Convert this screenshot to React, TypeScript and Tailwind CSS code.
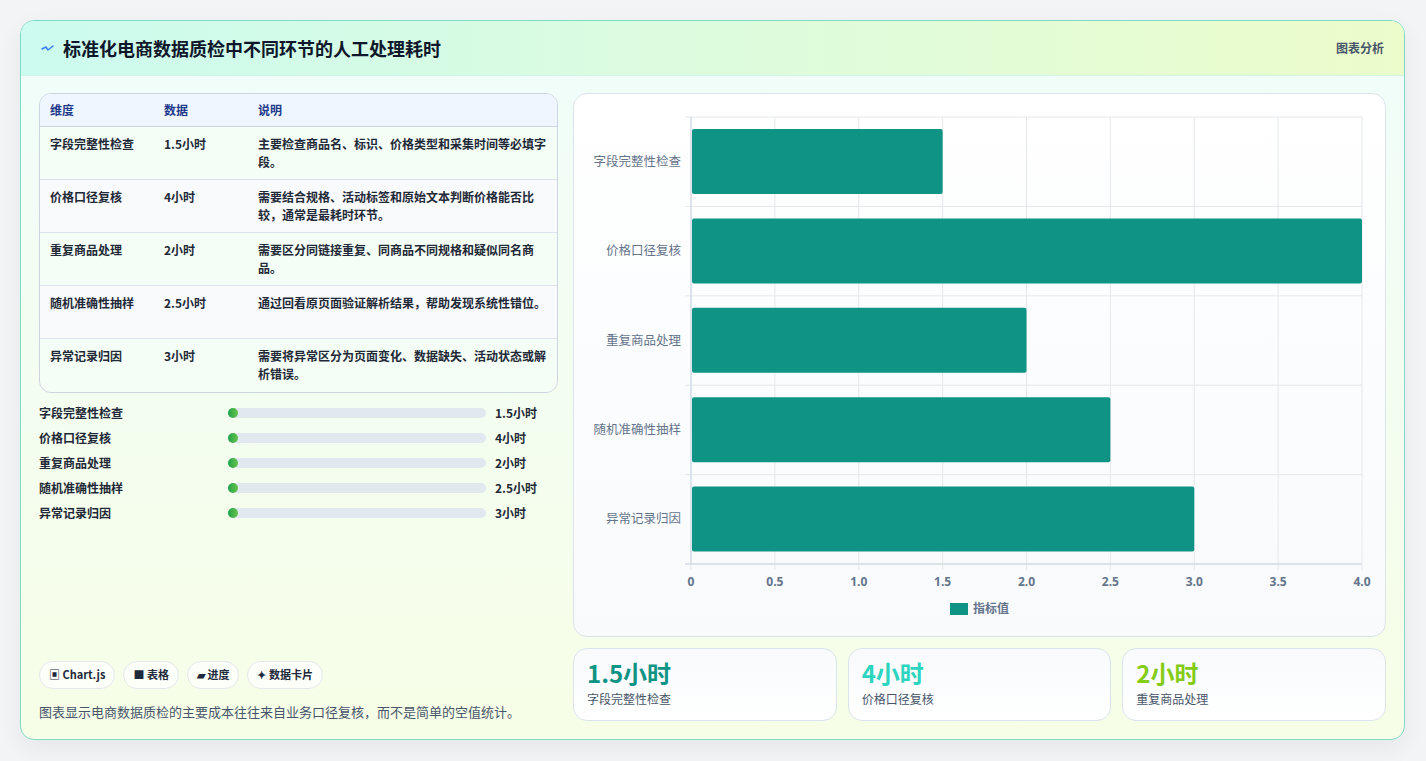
import React from "react";

const rows = [
  ["字段完整性检查", "1.5小时", "主要检查商品名、标识、价格类型和采集时间等必填字段。"],
  ["价格口径复核", "4小时", "需要结合规格、活动标签和原始文本判断价格能否比较，通常是最耗时环节。"],
  ["重复商品处理", "2小时", "需要区分同链接重复、同商品不同规格和疑似同名商品。"],
  ["随机准确性抽样", "2.5小时", "通过回看原页面验证解析结果，帮助发现系统性错位。"],
  ["异常记录归因", "3小时", "需要将异常区分为页面变化、数据缺失、活动状态或解析错误。"],
];
const vals = [1.5, 4, 2, 2.5, 3];

function Chart() {
  const x0 = 117, x1 = 788, y0 = 23, y1 = 470;
  const unit = (x1 - x0) / 4;
  const band = (y1 - y0) / 5;
  return (
    <svg width="811" height="542" viewBox="0 0 811 542" className="block">
      {[0, 1, 2, 3, 4, 5, 6, 7, 8].map((i) => (
        <line key={"v" + i} x1={x0 + i * unit / 2} x2={x0 + i * unit / 2} y1={y0} y2={y1 + 6} stroke="#e5e7eb" strokeWidth="1" />
      ))}
      {[0, 1, 2, 3, 4, 5].map((i) => (
        <line key={"h" + i} x1={x0 - 6} x2={x1} y1={y0 + i * band} y2={y0 + i * band} stroke="#e5e7eb" strokeWidth="1" />
      ))}
      <line x1={x0 - 6} x2={x1} y1={y1} y2={y1} stroke="#cbd5e1" />
      <line x1={x0} x2={x0} y1={y0} y2={y1} stroke="#cbd5e1" />
      {vals.map((v, i) => (
        <g key={i}>
          <rect x={x0 + 1} y={y0 + i * band + 12} width={v * unit - 1} height={65} rx="2" fill="#0e9384" />
          <text x={x0 - 10} y={y0 + i * band + band / 2 + 4} textAnchor="end" fontSize="12.5" fill="#64748b" fontFamily="'Noto Sans CJK SC', sans-serif">{rows[i][0]}</text>
        </g>
      ))}
      {["0", "0.5", "1.0", "1.5", "2.0", "2.5", "3.0", "3.5", "4.0"].map((t, i) => (
        <text key={t} x={x0 + i * unit / 2} y={492} textAnchor="middle" fontSize="12" fontWeight="bold" fill="#64748b" fontFamily="'Open Sans', sans-serif">{t}</text>
      ))}
      <rect x={376} y={509} width={18} height={12} fill="#0e9384" />
      <text x={399} y={519} fontSize="12" fontWeight="bold" fill="#64748b" fontFamily="'Noto Sans CJK SC', sans-serif">指标值</text>
    </svg>
  );
}

export default function App() {
  return (
    <div className="min-h-[761px] w-[1426px] bg-[#f3f4f6] p-[20px] pr-[21px]" style={{ fontFamily: "'Noto Sans CJK SC', 'Noto Sans', sans-serif" }}>
      <div className="rounded-[14px] border border-[#7ddcc6] overflow-hidden bg-gradient-to-b from-[#f0fdfa] to-[#f7fee7] shadow-[0_8px_24px_rgba(0,0,0,0.06)]">
        <div className="h-[55px] flex items-center justify-between px-[20px] bg-gradient-to-r from-[#ccfbef] to-[#ecfccb] border-b border-[#d1f5e8]">
          <div className="flex items-center gap-[8px]">
            <svg width="14" height="14" viewBox="0 0 14 14"><path d="M1 8 L5 6 L7 9 L12 5" fill="none" stroke="#3b82f6" strokeWidth="1.5" strokeLinecap="round" strokeLinejoin="round" /></svg>
            <span className="text-[18px] font-bold text-[#0f172a]">标准化电商数据质检中不同环节的人工处理耗时</span>
          </div>
          <span className="text-[12px] font-bold text-[#475569]">图表分析</span>
        </div>
        <div className="flex gap-[15px] px-[18px] pt-[17px] pb-[18px]">
          <div className="w-[519px] flex flex-col">
            <div className="rounded-[12px] border border-[#cbd5e1] overflow-hidden bg-white/60">
              <div className="flex h-[33px] items-center bg-[#eff6ff] border-b border-[#cbd5e1] text-[12px] font-bold text-[#1e3a8a]">
                <div className="w-[124px] pl-[10px]">维度</div>
                <div className="w-[94px]">数据</div>
                <div>说明</div>
              </div>
              {rows.map((r, i) => (
                <div key={i} className={`flex h-[53px] pt-[8px] text-[12px] font-bold text-[#1f2937] ${i < 4 ? "border-b border-[#dbe3ec]" : ""} ${i % 2 === 0 ? "bg-[#f0fdf4]/60" : "bg-[#f8fafc]"}`}>
                  <div className="w-[124px] pl-[10px] leading-[18px]">{r[0]}</div>
                  <div className="w-[94px] leading-[18px]">{r[1]}</div>
                  <div className="flex-1 pr-[10px] leading-[18px]">{r[2]}</div>
                </div>
              ))}
            </div>
            <div className="mt-[11px] flex flex-col gap-[7px]">
              {rows.map((r, i) => (
                <div key={i} className="flex items-center h-[18px] text-[12px] font-bold text-[#1f2937]">
                  <div className="w-[189px]">{r[0]}</div>
                  <div className="w-[258px] h-[10px] rounded-full bg-[#e2e8f0]">
                    <div className="w-[10px] h-[10px] rounded-full bg-gradient-to-r from-[#16a34a] to-[#65c34a]" />
                  </div>
                  <div className="ml-[9px]">{r[1]}</div>
                </div>
              ))}
            </div>
            <div className="flex-1" />
            <div className="flex gap-[8px] text-[11px] font-bold text-[#1e293b]">
              {["▣ Chart.js", "■ 表格", "▰ 进度", "✦ 数据卡片"].map((c) => (
                <span key={c} className="h-[28px] flex items-center px-[9px] rounded-full border border-[#e5e7eb] bg-white/70">{c}</span>
              ))}
            </div>
            <div className="mt-[13px] text-[13px] text-[#475569]">图表显示电商数据质检的主要成本往往来自业务口径复核，而不是简单的空值统计。</div>
          </div>
          <div className="flex-1 flex flex-col gap-[11px]">
            <div className="h-[544px] rounded-[14px] border border-[#dbe3ec] bg-gradient-to-b from-white to-[#f8fafc]">
              <Chart />
            </div>
            <div className="grid grid-cols-3 gap-[11px]">
              {[["1.5小时", "text-[#0e9384]", "字段完整性检查"], ["4小时", "text-[#2dd4bf]", "价格口径复核"], ["2小时", "text-[#84cc16]", "重复商品处理"]].map(([v, c, l]) => (
                <div key={l} className="h-[73px] rounded-[14px] border border-[#dbe3ec] bg-gradient-to-b from-[#f8fafc] to-white px-[13px] pt-[9px]">
                  <div className={`text-[24px] font-bold leading-[30px] ${c}`}>{v}</div>
                  <div className="text-[12px] text-[#475569] mt-[2px]">{l}</div>
                </div>
              ))}
            </div>
          </div>
        </div>
      </div>
    </div>
  );
}
